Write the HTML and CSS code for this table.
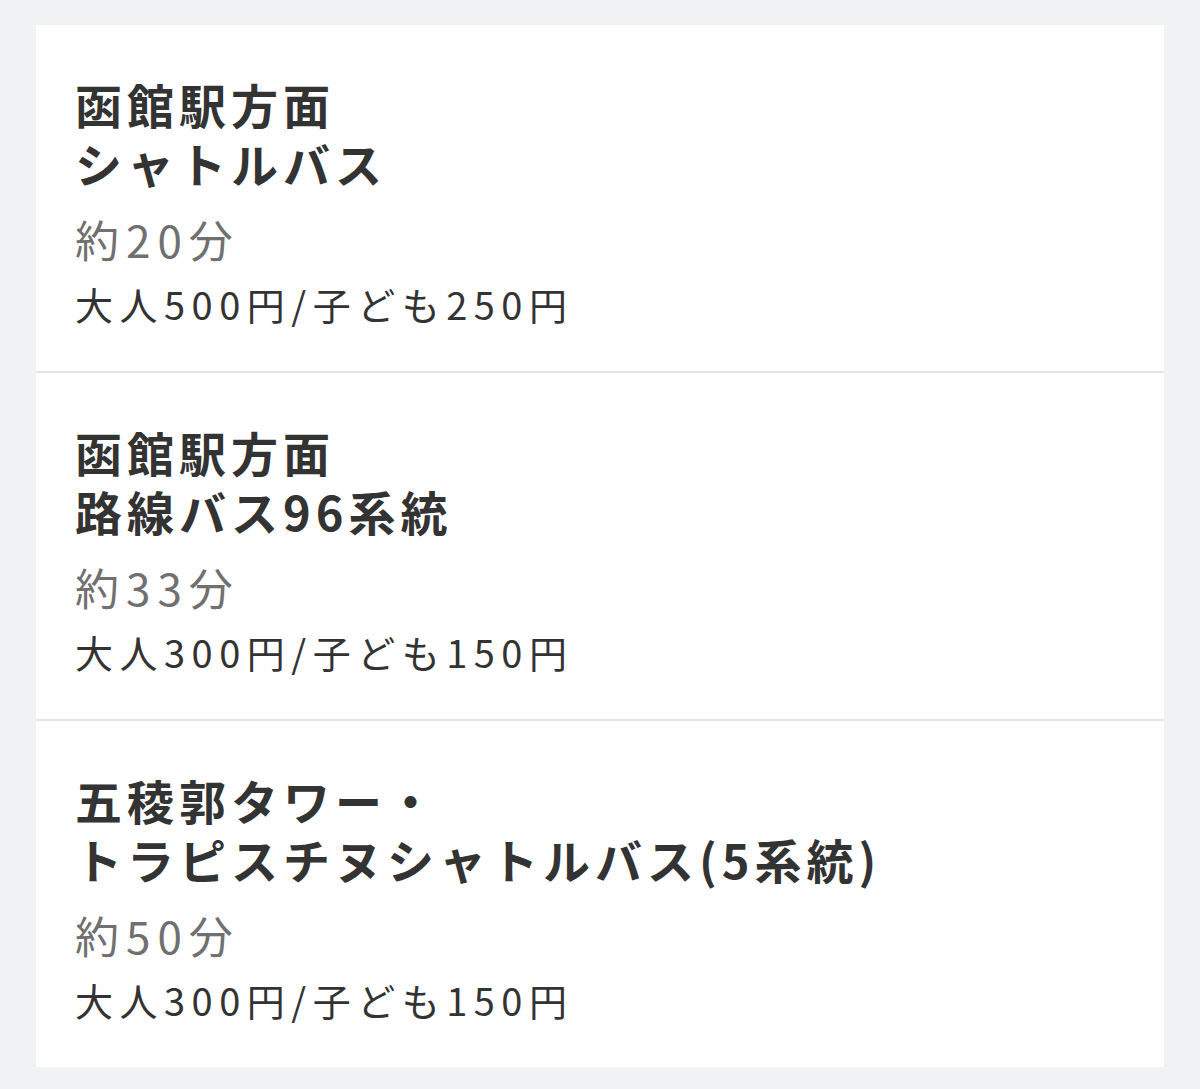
FILE: index.html
```html
<!DOCTYPE html>
<html lang="ja">
<head>
<meta charset="utf-8">
<link rel="stylesheet" href="styles.css">
</head>
<body>
<div class="card">
  <section class="route">
    <h2 class="title"><span class="line">函館駅方面</span><span class="line">シャトルバス</span></h2>
    <p class="time">約20分</p>
    <p class="fare">大人500円/子ども250円</p>
  </section>
  <section class="route">
    <h2 class="title"><span class="line">函館駅方面</span><span class="line">路線バス96系統</span></h2>
    <p class="time">約33分</p>
    <p class="fare">大人300円/子ども150円</p>
  </section>
  <section class="route">
    <h2 class="title"><span class="line">五稜郭タワー・</span><span class="line">トラピスチヌシャトルバス(5系統)</span></h2>
    <p class="time">約50分</p>
    <p class="fare">大人300円/子ども150円</p>
  </section>
</div>
</body>
</html>
```
FILE: styles.css
```css
html, body {
  margin: 0;
  padding: 0;
  background: #f1f2f4;
}
body {
  padding: 25px 36px 24px;
  font-family: "Noto Sans CJK JP", "Noto Sans", sans-serif;
}
.card {
  background: #ffffff;
}
.route {
  padding: 49px 39px 35px;
  border-bottom: 2px solid #e3e3e5;
}
.route:last-child {
  border-bottom: none;
}
.title {
  margin: 0;
  font-size: 47px;
  line-height: 59px;
  font-weight: 700;
  color: #333333;
  letter-spacing: 5px;
}
.title .line {
  display: block;
  height: 59px;
}
.time {
  margin: 14px 0 0;
  font-size: 44px;
  line-height: 66px;
  font-weight: 400;
  color: #707070;
  letter-spacing: 7px;
}
.fare {
  margin: 0;
  font-size: 38px;
  line-height: 64px;
  font-weight: 400;
  color: #333333;
  letter-spacing: 6.5px;
}
```
